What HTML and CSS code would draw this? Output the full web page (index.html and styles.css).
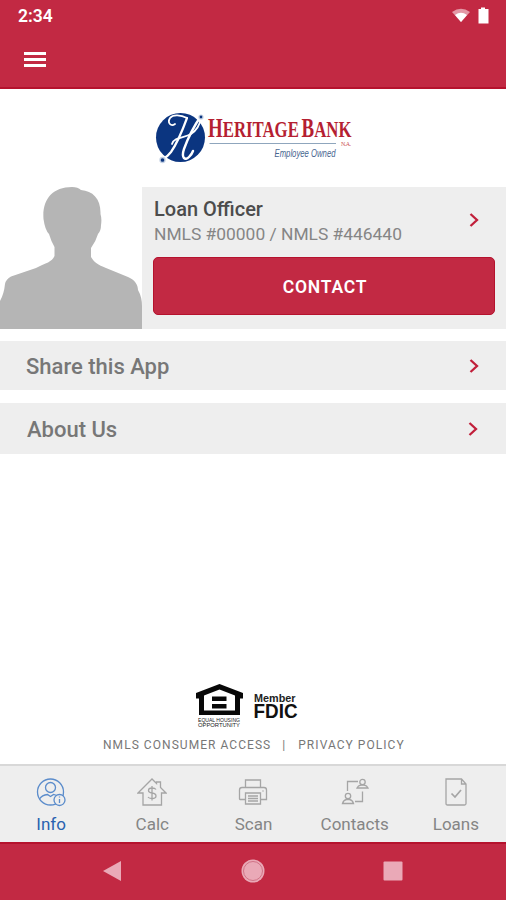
FILE: index.html
```html
<!DOCTYPE html>
<html lang="en">
<head>
<meta charset="utf-8">
<title>Heritage Bank</title>
<link rel="stylesheet" href="styles.css">
</head>
<body>
<header class="top">
  <div class="status">
    <span class="time">2:34</span>
    <svg class="status-icons" width="40" height="20" viewBox="0 0 40 20">
      <path d="M0 6Q9 -.5 18 6L9 16Z" fill="#e398a6"/>
      <path d="M3 9Q9 4.500 15 9L9 16Z" fill="#fff"/>
      <path d="M26.500 3h2.500V1.500h4V3H36.500V17.500H26.500Z" fill="#fff"/>
    </svg>
  </div>
  <button class="menu" aria-label="Menu"><i></i><i></i><i></i></button>
</header>
<main>
  <div class="brand">
    <svg width="200" height="56" viewBox="155 110 200 56">
      <circle cx="180.500" cy="137.500" r="24.500" fill="#0b3580"/>
      <g fill="none" stroke="#fff" stroke-linecap="round">
        <path stroke-width="2.200" d="M187 118C183 129 178 142 171 152C168 156 165 158 163 159"/>
        <path stroke-width="2.400" d="M201 116C194 126 188 138 184 149C181 158 185 161 189 157Q192 154 193 151"/>
        <path stroke-width="1.800" d="M187 118C181 115 173 114 170 118C167 123 171 127 175 124M172 144C174 137 184 138 191 134C197 130 200 124 201 118"/>
      </g>
      <circle cx="162.500" cy="160" r="2.500" fill="#0b3580" stroke="#c3d0e3" stroke-width="1.300"/>
      <circle cx="201" cy="117" r="2" fill="#0b3580" stroke="#c3d0e3" stroke-width="1.200"/>
      <text class="brand-name" x="208" y="137" font-size="27" textLength="143.500" lengthAdjust="spacingAndGlyphs">H<tspan font-size="24">ERITAGE</tspan><tspan dx="4">B</tspan><tspan font-size="24">ANK</tspan></text>
      <text class="na" x="341" y="146" font-size="6" textLength="10">N.A.</text>
      <path d="M209.500 143.500H336" stroke="#8fa6bd"/>
      <text class="owned" x="274.500" y="157" font-size="10" textLength="61" lengthAdjust="spacingAndGlyphs">Employee Owned</text>
    </svg>
  </div>
  <section class="officer">
    <svg class="avatar" width="142" height="142" viewBox="0 0 142 142">
      <path fill="#b5b5b5" d="M0 142V114Q4 107 5 97Q6 92 11 89.500L36 81C46 76 52 75 54.500 69V60Q51 54 49 47Q45 43 43.500 32C42 13 52 0 72 0Q78 0 81 3C93 4 101 12 100.500 27Q102 32 101 38Q101 44 98 47Q96 54 91 61V70C94 75 98 78 106 81L128 90C135 93 138 98 138 103Q142 110 142 119V142Z"/>
    </svg>
    <div class="card">
      <div class="card-head">
        <div>
          <h1>Loan Officer</h1>
          <p>NMLS #00000 / NMLS #446440</p>
        </div>
        <svg class="chevron" width="10" height="14" viewBox="0 0 10 14"><path d="M1.500 1L8 7L1.500 13"/></svg>
      </div>
      <button class="contact">CONTACT</button>
    </div>
  </section>
  <a class="row share"><span>Share this App</span><svg class="chevron" width="10" height="14" viewBox="0 0 10 14"><path d="M1.500 1L8 7L1.500 13"/></svg></a>
  <a class="row about"><span>About Us</span><svg class="chevron" width="10" height="14" viewBox="0 0 10 14"><path d="M1.500 1L8 7L1.500 13"/></svg></a>
  <footer class="legal">
    <svg width="104" height="46" viewBox="195 683 104 46">
      <path d="M219.500 684L243 693V698.500H240V715H199V698.500H196V693ZM219.500 689.500L204 695.500V710.500H235V695.500Z" fill="#080808" fill-rule="evenodd"/>
      <path d="M212 696.500h14.500v4.500H212ZM212 704h14.500v4.500H212Z" fill="#080808"/>
      <g class="fair">
        <text x="198" y="722" font-size="4.700" textLength="42" lengthAdjust="spacingAndGlyphs">EQUAL HOUSING</text>
        <text x="198" y="727.300" font-size="4.700" textLength="42" lengthAdjust="spacingAndGlyphs">OPPORTUNITY</text>
        <text class="member" x="254" y="701.500" font-size="10" textLength="41.500" lengthAdjust="spacingAndGlyphs">Member</text>
        <text class="fdic" x="253.500" y="717.500" font-size="19.500" textLength="44" lengthAdjust="spacingAndGlyphs">FDIC</text>
      </g>
    </svg>
    <div class="links"><a>NMLS CONSUMER ACCESS</a><span>|</span><a>PRIVACY POLICY</a></div>
  </footer>
</main>
<nav class="tabs">
  <a class="tab active">
    <svg width="30" height="30" viewBox="0 0 30 30"><circle cx="14.500" cy="15" r="13"/><circle cx="14.500" cy="10.500" r="5"/><path d="M3.500 22Q6 18 11.500 17.500L14.500 19.500L17.500 17.500L21 18.500"/><circle class="badge" cx="23.500" cy="23" r="5.500"/><path d="M23.500 22v4M23.500 19.500v1"/></svg>
    <span>Info</span>
  </a>
  <a class="tab">
    <svg width="30" height="30" viewBox="0 0 30 30"><path d="M1 16L15 2L19.500 6.500V5H23.500V10.500L29 16H24.500V28H6V16Z"/><path d="M19 12.500Q18 11 15 11Q11.500 11 11.500 13.500Q11.500 15.500 15 16Q19 16.500 19 19Q19 21.500 15 21.500Q12 21.500 11 20M15 9v14.500"/></svg>
    <span>Calc</span>
  </a>
  <a class="tab">
    <svg width="30" height="30" viewBox="0 0 30 30"><path d="M7.500 10V3H22.500V10M7.500 22.500H2Q1.500 22.500 1.500 22V13Q1.500 10.500 4 10.500H26Q28.500 10.500 28.500 13V22.500H22.500M7.500 16H22.500V27H7.500ZM10 19H20M10 21.500H20M10 24H20M24.500 14h1"/></svg>
    <span>Scan</span>
  </a>
  <a class="tab">
    <svg width="30" height="30" viewBox="0 0 30 30"><path d="M7.500 14V4.500H18M15 24.500H22.500V14.500"/><circle cx="22.500" cy="5" r="2.700"/><circle cx="8" cy="19" r="2.700"/><path d="M17 11Q18 8.500 21 8H24Q27 8.500 28 11ZM2.500 26.500Q3.500 23 6.500 22.500H9.500Q12.500 23 13.500 26.500Z"/></svg>
    <span>Contacts</span>
  </a>
  <a class="tab">
    <svg width="30" height="30" viewBox="0 0 30 30"><path d="M5 2H20.500L25 7V26.500Q25 28 23.500 28H6.500Q5 28 5 26.500ZM20.500 2V7H25"/><path class="check" d="M10.500 16.500L14 20L20 13"/></svg>
    <span>Loans</span>
  </a>
</nav>
<div class="system">
  <svg width="24" height="24" viewBox="0 0 24 24"><path d="M2 12L20 2V22Z"/></svg>
  <svg width="24" height="24" viewBox="0 0 24 24"><circle cx="12" cy="12" r="11.500"/><circle class="ring" cx="12" cy="12" r="9.500"/></svg>
  <svg width="24" height="24" viewBox="0 0 24 24"><rect x="2.500" y="2.500" width="19" height="19" rx="1"/></svg>
</div>
</body>
</html>
```
FILE: styles.css
```css
* { box-sizing: border-box; }
body {
  margin: 0;
  height: 900px;
  display: flex;
  flex-direction: column;
  background: #fff;
  font-family: Roboto, "Liberation Sans", sans-serif;
  overflow: hidden;
}
h1, p { margin: 0; }
button { border: 0; padding: 0; font-family: inherit; }
svg { display: block; flex: none; }

.top {
  height: 88.500px;
  flex: none;
  background: #c22943;
  border-bottom: 2px solid #b5122d;
}
.status {
  height: 32px;
  padding: 0 13px 0 18px;
  display: flex;
  align-items: center;
  justify-content: space-between;
  color: #fff;
}
.time { font-size: 17.500px; font-weight: 600; }
.status-icons { margin-right: 1px; }
.menu {
  width: 22px;
  margin: 19.500px 0 0 24px;
  display: grid;
  gap: 3px;
  background: none;
}
.menu i { height: 3px; background: #fff; }

main { flex: 1; display: flex; flex-direction: column; }
.brand { padding: 21.500px 0 0 155px; height: 98.500px; }
.brand svg { overflow: visible; }
.brand-name { font-family: "Liberation Serif", serif; font-weight: bold; fill: #b51f32; }
.na { font-family: "Liberation Serif", serif; fill: #c55; }
.owned { font-family: "Liberation Sans", sans-serif; font-style: italic; fill: #47658f; }

.officer { display: flex; height: 142px; }
.card { flex: 1; background: #eee; padding: 11px 11px 0 12px; }
.card-head { display: flex; justify-content: space-between; height: 59px; padding-right: 16px; }
.card-head .chevron { margin-top: 15px; }
h1 { font-size: 20px; line-height: 23px; font-weight: 500; color: #4c4c4c; }
.card p { font-size: 17.400px; line-height: 27px; color: #858585; }
.contact {
  display: block;
  width: 342px;
  height: 58px;
  margin-left: -1px;
  background: #c22943;
  border: 1px solid #b5122d;
  border-radius: 5px;
  color: #fff;
  font-size: 17.500px;
  font-weight: 600;
  letter-spacing: .8px;
  padding: 2px 0 0 2px;
}
.chevron path { fill: none; stroke: #c11f3a; stroke-width: 2.300; }
.row {
  display: flex;
  align-items: center;
  justify-content: space-between;
  background: #eee;
  color: #777;
  font-size: 22px;
  font-weight: 500;
}
.share { height: 49px; margin-top: 12px; padding: 1px 27px 0 26px; }
.about { height: 51px; margin-top: 13px; padding: 1px 28px 0 27px; }
.row span { padding-top: 1px; }

.legal { margin-top: auto; height: 81px; }
.legal svg { margin-left: 195px; }
.fair { font-family: "Liberation Sans", sans-serif; fill: #222; }
.member { font-weight: bold; }
.fdic { font-weight: bold; fill: #111; }
.links {
  display: flex;
  padding: 8.500px 0 0 103px;
  font-size: 12px;
  line-height: 14px;
  letter-spacing: 1.050px;
  color: #777;
}
.links span { margin: 0 12px 0 11px; }

.tabs {
  height: 77.500px;
  flex: none;
  display: grid;
  grid-template-columns: repeat(5, 1fr);
  background: #eee;
  border-top: 2px solid #d8d8d8;
}
.tab {
  display: flex;
  flex-direction: column;
  align-items: center;
  padding: 10.500px 0 0 1px;
  color: #858585;
  font-size: 17px;
  line-height: 20px;
}
.tab svg { fill: none; stroke: #a5a5a5; stroke-width: 1.300; }
.tab span { margin-top: 7px; }
.active { color: #2a62b0; }
.active svg { stroke: #5b8ccb; }
.badge { fill: #eee; }
.tab .check { stroke-width: 1.700; }

.system {
  height: 58.500px;
  flex: none;
  display: grid;
  grid-template-columns: repeat(3, 140px);
  justify-content: center;
  justify-items: center;
  align-items: center;
  background: #c22943;
  border-top: 2px solid #b5122d;
  padding-bottom: 2px;
  fill: #eaa9b7;
}
.ring { fill: none; stroke: #c9667a; stroke-width: .8; }
```
